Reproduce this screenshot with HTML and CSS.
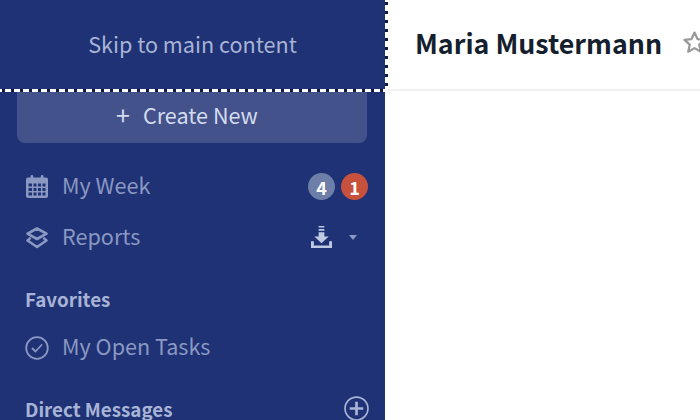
FILE: index.html
```html
<!DOCTYPE html>
<html lang="en">
<head>
<meta charset="utf-8">
<title>Maria Mustermann</title>
<link rel="stylesheet" href="styles.css">
</head>
<body>
<div class="app">
  <aside class="sidebar">
    <a class="skip" href="#main">Skip to main content</a>
    <div class="sidebar-body">
      <button class="create"><span class="plus">+</span>Create New</button>
      <nav class="nav">
        <div class="row week">
          <svg class="icon" viewBox="0 0 24 24" width="24" height="24"><path fill="currentColor" fill-rule="evenodd" d="M3 2.500h2.500V1.500a1.400 1.400 0 0 1 2.800 0v1h7.400v-1a1.400 1.400 0 0 1 2.800 0v1H21a2 2 0 0 1 2 2V21a2 2 0 0 1-2 2H3a2 2 0 0 1-2-2V4.500a2 2 0 0 1 2-2zM3.500 8.500v3h3.500v-3zm5 0v3h3v-3zm4.500 0v3h3v-3zm4.500 0v3h3v-3zM3.500 13v3h3.500v-3zm5 0v3h3v-3zm4.500 0v3h3v-3zm4.500 0v3h3v-3zM3.500 17.500v3h3.500v-3zm5 0v3h3v-3zm4.500 0v3h3v-3zm4.500 0v3h3v-3z"/></svg>
          <span class="label">My Week</span>
          <span class="badges"><span class="badge grey">4</span><span class="badge red">1</span></span>
        </div>
        <div class="row reports">
          <svg class="icon" viewBox="0 0 24 22" width="24" height="22"><path fill="none" stroke="currentColor" stroke-width="2.600" stroke-linejoin="round" d="M12 1.500l9.500 5.200L12 12 2.500 6.700z"/><path fill="none" stroke="currentColor" stroke-width="2.600" stroke-linejoin="round" stroke-linecap="round" d="M4.800 11.500L2.500 13.500l9.500 6.500 9.500-6.500-2.300-2"/></svg>
          <span class="label">Reports</span>
          <span class="tools">
            <svg class="dl" viewBox="0 0 22 24" width="21" height="23"><path fill="currentColor" d="M8 0h6v1.500H8zM8 3h6v2H8zM8 6.500h6V11h4.500L11 18 3.500 11H8zM0 16h3v4.500h16V16h3v7H0z"/></svg>
            <span class="caret"></span>
          </span>
        </div>
        <h2 class="heading fav">Favorites</h2>
        <div class="row tasks">
          <svg class="icon" viewBox="0 0 24 24" width="24" height="24"><circle cx="12" cy="12" r="10.800" fill="none" stroke="currentColor" stroke-width="1.800"/><path fill="none" stroke="currentColor" stroke-width="1.800" stroke-linecap="round" stroke-linejoin="round" d="M7.500 12.500l3 3 6-6.500"/></svg>
          <span class="label">My Open Tasks</span>
        </div>
        <div class="dm">
          <h2 class="heading">Direct Messages</h2>
          <svg class="add" viewBox="0 0 24 24" width="25" height="25"><circle cx="12" cy="12" r="11" fill="none" stroke="currentColor" stroke-width="1.600"/><path fill="none" stroke="currentColor" stroke-width="2.600" d="M12 5.500v13M5.500 12h13"/></svg>
        </div>
      </nav>
    </div>
  </aside>
  <main class="main" id="main">
    <header class="topbar">
      <h1 class="title">Maria Mustermann</h1>
      <svg class="star" viewBox="0 0 24 24" width="25" height="25"><path fill="none" stroke="currentColor" stroke-width="2.200" stroke-linejoin="round" d="M12 2.500l2.900 6.200 6.700.8-5 4.600 1.400 6.700-6-3.400-6 3.400 1.400-6.700-5-4.600 6.700-.8z"/></svg>
    </header>
  </main>
</div>
</body>
</html>
```
FILE: styles.css
```css
* { box-sizing: border-box; }
html, body { margin: 0; height: 100%; overflow: hidden; background: #fff; }
body { font-family: "Noto Sans CJK JP", "Noto Sans", sans-serif; }
.app { display: flex; width: 700px; height: 420px; overflow: hidden; }
.sidebar { width: 385px; flex: none; background: #1f3275; position: relative; color: #a0add0; }
.skip {
  position: absolute; top: 0; left: 0; z-index: 2;
  width: 385px; height: 89px; padding-bottom: 3px;
  display: flex; align-items: center; justify-content: center;
  background: #1f3275; color: #a8b4d6; font-size: 21.6px; text-decoration: none;
}
.skip::after {
  content: ""; position: absolute; left: 0; top: 89px; width: 388px; height: 3px;
  background: repeating-linear-gradient(90deg, #fff 0 2px, #101a42 2px 5px, #fff 5px 9px);
}
.skip::before {
  content: ""; position: absolute; left: 385px; top: 0; width: 3px; height: 89px;
  background: repeating-linear-gradient(180deg, #fff 0 2px, #101a42 2px 5px, #fff 5px 9px);
}
.sidebar-body { padding: 90px 18px 0 17px; }
.create {
  display: flex; align-items: center; justify-content: center;
  width: 350px; height: 53px; margin: 0; padding: 0 10px 5px 0;
  background: #43528a; border: 0; border-radius: 0 0 8px 8px;
  color: #d5dcf0; font: inherit; font-size: 21.6px;
}
.plus { margin-right: 13px; font-size: 25px; line-height: 1; font-weight: 400; }
.nav { display: flex; flex-direction: column; }
.row { display: flex; align-items: center; height: 51px; color: #8a98c2; }
.week { margin-top: 18px; }
.icon { flex: none; margin: 0 13px 0 8px; }
.label { font-size: 21.6px; position: relative; top: -2px; }
.badges { margin-left: auto; display: flex; gap: 6px; margin-right: -1px; }
.badge { width: 27px; height: 27px; border-radius: 50%; display: flex; align-items: center; justify-content: center; color: #fff; font-size: 18px; font-weight: 700; }
.grey { background: #6d7fa8; }
.red { background: #c8513d; }
.tools { margin-left: auto; display: flex; align-items: center; color: #c0c9e2; margin-right: 10px; }
.caret { width: 0; height: 0; border: 4px solid transparent; border-top: 5px solid #8a98c2; border-bottom: 0; margin-left: 17px; }
.heading { margin: 0; font-size: 18.8px; font-weight: 700; color: #a8b4d6; line-height: 24px; }
.fav { margin: 24px 0 0 8px; }
.tasks { margin-top: 11px; }
.dm { display: flex; justify-content: space-between; align-items: center; margin: 23px -2px 0 8px; }
.add { color: #a8b4d6; }
.main { flex: 1; min-width: 0; }
.topbar { display: flex; align-items: center; height: 91px; padding: 0 0 5px 30px; border-bottom: 2px solid #f0f1f3; gap: 20px; white-space: nowrap; }
.title { margin: 0; font-size: 26.8px; font-weight: 700; color: #15202e; }
.star { flex: none; color: #999; }
```
